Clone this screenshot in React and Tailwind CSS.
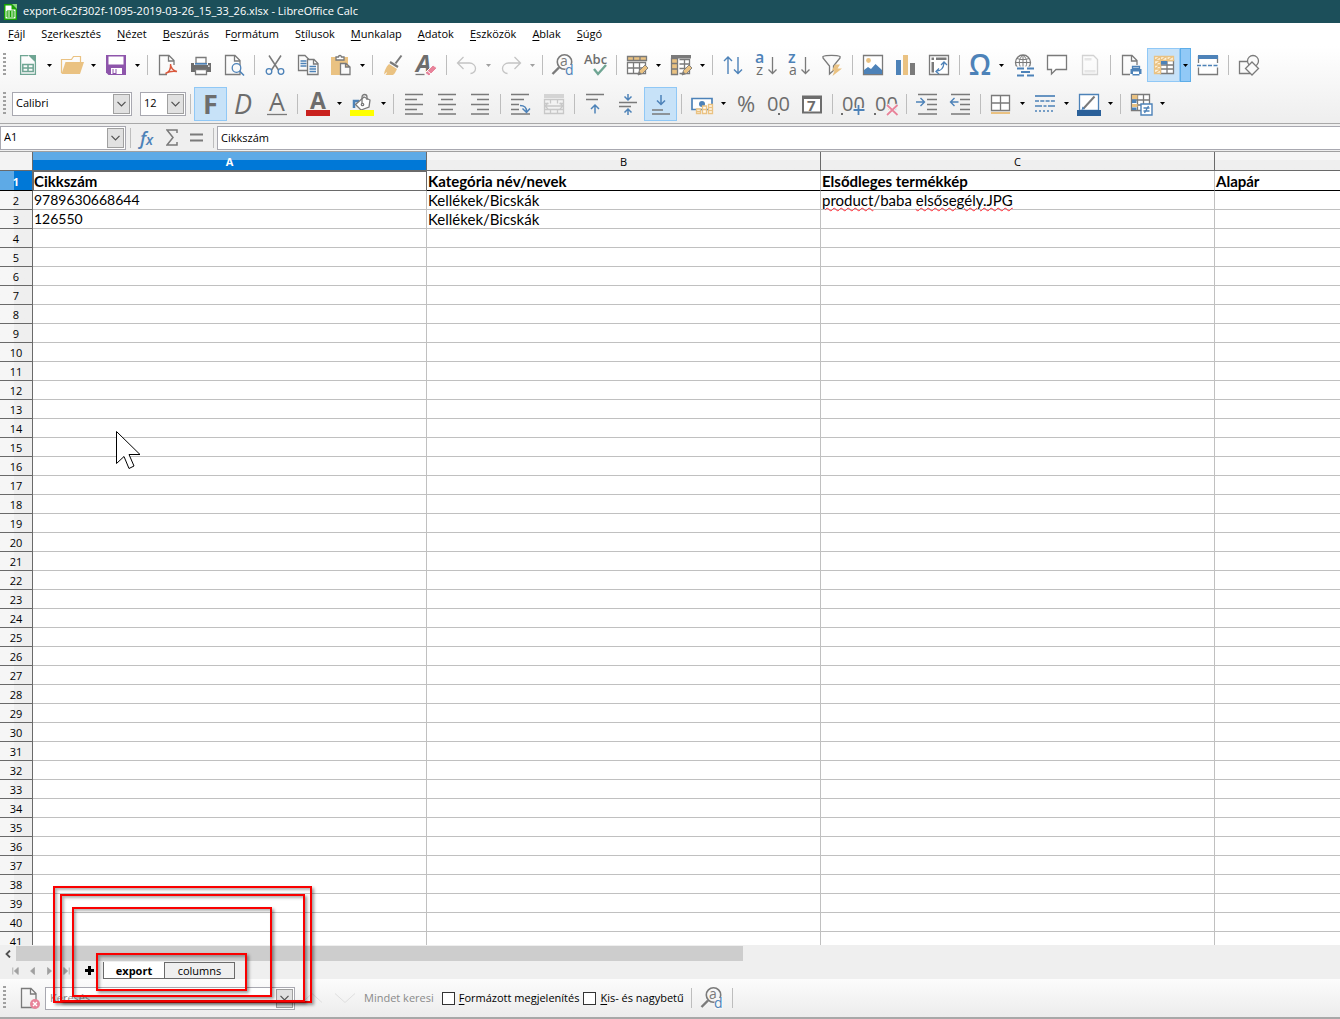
import { useState } from 'react'
import clsx from 'clsx'

const GRAY = '#7a7a7a'
const BLUE = '#4d82b8'
const SAND = '#eac282'
const PINK = '#e8839a'
const GREEN = '#6fa593'

/* Shared 24x24 icon canvas */
function Icon({ children }) {
  return (
    <svg
      width="24"
      height="24"
      viewBox="0 0 24 24"
      fill="none"
      stroke={GRAY}
      strokeWidth="1.3"
      className="shrink-0 overflow-visible"
      aria-hidden="true"
    >
      {children}
    </svg>
  )
}

/* Letter used as part of an icon */
function Glyph({ children, fill = '#6d6d6d', ...props }) {
  return (
    <text fontFamily="Open Sans, sans-serif" fill={fill} stroke="none" {...props}>
      {children}
    </text>
  )
}

const Page = () => <path d="M3.5 2.5h9.5l5 5v14H3.5zM12.5 2.5v5.5h5.5" />

const Pencil = () => (
  <g transform="translate(13 12)" stroke="none">
    <path d="M0 10l1.5-4.5L7 0l3 3-5.5 5.5z" fill={SAND} stroke={GRAY} strokeWidth="0.9" />
    <path d="M0 10l1.2-3.6 2.4 2.4z" fill={GRAY} />
  </g>
)

const icons = {
  newDoc: (
    <g stroke={GREEN}>
      <path d="M12 2.6H4.6v18.8h14.8V9" />
      <path d="M12 2h8v8z" fill={GREEN} stroke="none" />
      <path d="M6.8 11.5h10.4v7H6.8zM6.8 15h10.4M12 11.5v7" strokeWidth="1.5" />
    </g>
  ),
  open: (
    <g stroke="none">
      <path d="M1.5 20V6.5h10l2-3h7V9" stroke={SAND} strokeWidth="1.2" />
      <path d="M5.5 9h18.5L20 21H1.5z" fill={SAND} />
    </g>
  ),
  save: (
    <g stroke="none">
      <path d="M2 2h20v20H4.5L2 19.5z" fill="#8e55ab" />
      <path d="M4.5 3.5h15v8h-15zM7 15h11v6H7z" fill="#fff" />
      <path d="M8.5 16h4v5h-4z" fill="#8e55ab" />
      <path d="M9.5 16h2v4h-2z" fill="#fff" />
    </g>
  ),
  pdf: (
    <>
      <Page />
      <path d="M11 12h10v11H11z" fill="#fafafa" stroke="none" />
      <path d="M9.5 20.5c4-1.5 5.5-5 5-9.5 0 4 3 7 6.5 7.5-4-.8-8 0-11.5 2z" stroke="#d9583c" strokeWidth="1.4" />
    </>
  ),
  print: (
    <g stroke="none">
      <path d="M7 4.5h10v6H7z" fill="#fff" stroke={GRAY} />
      <path d="M2 10h3v2h14v-2h3v9H2z" fill="#6d6d6d" />
      <path d="M6 10h12v1.6H6z" fill={BLUE} />
      <path d="M6.5 16.5h11v5h-11z" fill="#fff" stroke={GRAY} />
      <path d="M19 12.5h1.6v1.3H19z" fill="#fff" />
    </g>
  ),
  preview: (
    <>
      <Page />
      <circle cx="14.5" cy="15" r="4.3" fill="#fafafa" stroke={BLUE} />
      <path d="M17.5 18l4.5 4.5" stroke={BLUE} strokeWidth="1.6" />
    </>
  ),
  cut: (
    <>
      <path d="M6 2.5L15.5 17M18 2.5L8.5 17" strokeWidth="1.5" />
      <circle cx="6" cy="18.5" r="2.8" stroke={BLUE} />
      <circle cx="18" cy="18.5" r="2.8" stroke={BLUE} />
    </>
  ),
  copy: (
    <>
      <path d="M2.5 2.5h6.5l4 4v11H2.5z" fill="#fafafa" />
      <path d="M4.5 8h6M4.5 10.5h6M4.5 13h6" stroke={BLUE} />
      <path d="M11.5 6.5h6.5l4 4v11H11.5zM17.5 6.5V11H22" fill="#fafafa" />
      <path d="M13.5 13.5h6.5M13.5 16h6.5M13.5 18.5h6.5" stroke={BLUE} />
    </>
  ),
  paste: (
    <>
      <path d="M2 4h17v18H2z" fill={SAND} stroke="none" />
      <path d="M7 7V4h2.5a1.5 1.5 0 0 1 3 0H15v3z" fill="#fff" />
      <path d="M11.5 10.5h5.5l4 3.5v7.5h-9.5zM16.5 10.5V14h4" fill="#fafafa" />
    </>
  ),
  brush: (
    <>
      <path d="M20.5 2.5l-6 8" strokeWidth="2" />
      <path d="M9 9l8 5" strokeWidth="2.2" />
      <path d="M8 11l8 5c-1.5 3.5-3 5.5-4 6H4.5c1-1 1.5-2 1.5-3l-3 2.5C3.5 17.5 5 14 8 11z" fill={SAND} stroke="none" />
    </>
  ),
  clear: (
    <>
      <Glyph x="2" y="19" fontSize="24" fontWeight="700" fontStyle="italic">A</Glyph>
      <path d="M1.5 21.5h9" />
      <path d="M11 20l8-8 4 3-8 8z" fill={PINK} stroke="#fafafa" strokeWidth="1" />
      <path d="M13 17.5l4 3.5" stroke="#fafafa" strokeWidth="1" />
    </>
  ),
  undo: <path d="M8.5 4L2.5 10l6 6M2.5 10h12a6 5.5 0 0 1 6 5.5 5 5 0 0 1-5 5" stroke="#c4c4c4" />,
  redo: <path d="M15.5 4l6 6-6 6M21.5 10h-12a6 5.5 0 0 0-6 5.5 5 5 0 0 0 5 5" stroke="#c4c4c4" />,
  find: (
    <>
      <circle cx="13.5" cy="9" r="7.2" strokeWidth="1.6" />
      <path d="M8 14.5L1.5 21" strokeWidth="2.4" />
      <Glyph x="9" y="13" fontSize="14" fill={GRAY}>a</Glyph>
      <path d="M14.500 12h8v11h-8z" fill="#f7f7f7" stroke="none" />
      <Glyph x="14" y="22" fontSize="14" fill={BLUE}>d</Glyph>
    </>
  ),
  spell: (
    <>
      <Glyph x="0" y="11" fontSize="13" fontWeight="600">Abc</Glyph>
      <path d="M10 16l4 5 8-9" stroke={GREEN} strokeWidth="2.4" />
    </>
  ),
  rows: (
    <>
      <path d="M2.5 9.5h18v11h-18zM2.5 15h18M8.5 9.5v11M14.5 9.5v11" fill="#fff" />
      <path d="M2.5 3.5h19v4h-19zM8.5 3.5v4M15 3.5v4" fill={SAND} />
      <Pencil />
    </>
  ),
  cols: (
    <>
      <path d="M10.5 6.5h10v14h-10M10.5 11h10M10.5 15.5h10M15.5 6.5v14" fill="#fff" />
      <path d="M2 2h20v3.5H2z" fill={GRAY} stroke="none" />
      <path d="M2.5 5.5h6v16h-6zM2.5 10.5h6M2.5 16h6" fill={SAND} />
      <Pencil />
    </>
  ),
  sort: (
    <g stroke={BLUE} strokeWidth="1.4">
      <path d="M7 21V4M3 8l4-4 4 4" />
      <path d="M17 4v16.5M13 16.500l4 4 4-4" />
    </g>
  ),
  sortAz: (
    <>
      <Glyph x="1" y="10" fontSize="16" fontWeight="600" fill={BLUE}>a</Glyph>
      <Glyph x="2" y="22" fontSize="15">z</Glyph>
      <path d="M18.5 4v16.5M14.5 16.5l4 4 4-4" />
    </>
  ),
  sortZa: (
    <>
      <Glyph x="1" y="10" fontSize="16" fontWeight="600" fill={BLUE}>z</Glyph>
      <Glyph x="2" y="22" fontSize="14">a</Glyph>
      <path d="M18.5 4v16.5M14.5 16.5l4 4 4-4" />
    </>
  ),
  filter: (
    <>
      <path d="M3 5V3.500c3-1.500 14-1.500 17 0V5l-6.500 8v4.500L9.500 21v-8z" fill="#fafafa" />
      <path d="M15 11.5h5l-2.5 4H22L12.5 23l2-5.5H12z" fill={SAND} stroke="none" />
    </>
  ),
  image: (
    <>
      <path d="M2.5 2.5h19v19h-19z" fill="#fff" />
      <circle cx="7.5" cy="7.5" r="2.4" fill={SAND} stroke="none" />
      <path d="M3 21v-4l4-3 3 2 4.500-5 6.500 6v4z" fill={BLUE} stroke="none" />
    </>
  ),
  chart: (
    <g stroke="none">
      <path d="M2 7h5v15H2z" fill={BLUE} />
      <path d="M9 2h5v20H9z" fill={SAND} />
      <path d="M16 10h5v12h-5z" fill={GRAY} />
    </g>
  ),
  pivot: (
    <>
      <path d="M2.5 2.5h19v19h-19z" fill="#fff" />
      <path d="M4.5 4.5H7V7H4.5zM9 4.5h10.5V7H9zM4.5 9H7v10.5H4.5z" fill={GRAY} stroke="none" />
      <path d="M9.5 18c5 0 7-3 7.5-8M14 12l3-3 3 3M12 15.5l-3 3 3 2.500" stroke={BLUE} />
    </>
  ),
  omega: <Glyph x="1" y="22" fontSize="28" fontWeight="600" fill={BLUE}>Ω</Glyph>,
  link: (
    <>
      <circle cx="11" cy="9.5" r="7.5" />
      <path d="M11 2v15M3.5 9.5h15M11 2c-5 4-5 11 0 15M11 2c5 4 5 11 0 15M5 5.5c4 1.500 8 1.500 12 0" strokeWidth="1" />
      <path d="M3 13.5h20v10H3z" fill="#fafafa" stroke="none" />
      <path d="M5 15.5h7M15 15.5h7M9 19h9M5 22.5h7M15 22.5h7" stroke={BLUE} strokeWidth="1.9" />
    </>
  ),
  comment: <path d="M2.5 2.5h19v14H11l-4.5 4.5v-4.5h-4z" fill="#fff" />,
  header: (
    <g stroke="#d2d2d2">
      <path d="M4.5 2.5h11l4 4v15h-15z" />
      <path d="M6.5 5h7v2.5h-7zM6.5 17h11v2.5h-11z" fill="#e6e6e6" stroke="none" />
    </g>
  ),
  printArea: (
    <>
      <Page />
      <path d="M11 12h12v11H11z" fill="#fafafa" stroke="none" />
      <path d="M13.5 13.5h7v2h-7z" stroke={BLUE} />
      <path d="M11.5 16h11v5h-2v1.5h-7V21h-2z" fill={BLUE} stroke="none" />
      <path d="M14 18.500h6V21h-6z" fill="#fff" stroke="none" />
    </>
  ),
  freeze: (
    <>
      <path d="M8.5 7.500h13v13h-13zM8.5 12h13M8.500 16h13M15 7.500v13" fill="#fff" />
      <path
        d="M2.5 3.500h19v4h-13v13h-6zM8.5 3.500v4h-6M15 3.500v4M2.5 12h6M2.5 16h6M2.5 7.500l6-4M8.500 7.500l6-4M15 7.500l6-4M2.500 12l6-4M2.500 16l6-4M2.500 20.500l6-4"
        fill="#fff4df"
        stroke={SAND}
      />
      <path d="M9 8h6v3.500H9z" fill={BLUE} stroke="none" />
    </>
  ),
  split: (
    <>
      <path d="M2.5 10V3.5h19V10M2.5 14.5v7h19v-7" fill="#fff" />
      <path d="M2 2h20v4H2z" fill={BLUE} stroke="none" />
      <path d="M1 12.5h22" stroke={BLUE} strokeDasharray="4 1.5" />
    </>
  ),
  shapes: (
    <>
      <path d="M2.5 8.5h10v12h-10z" />
      <circle cx="16" cy="8" r="5.5" fill="#fafafa" />
      <path d="M15 9l6.5 6.5-6.5 6.5-6.5-6.5z" fill="#fafafa" />
    </>
  ),
  bold: <Glyph x="4" y="22" fontSize="27" fontWeight="700">F</Glyph>,
  italic: <Glyph x="2" y="22" fontSize="27" fontStyle="italic">D</Glyph>,
  underline: (
    <>
      <Glyph x="4" y="19" fontSize="25">A</Glyph>
      <path d="M2 22.5h20" />
    </>
  ),
  fontColor: (
    <>
      <Glyph x="4" y="17" fontSize="23" fontWeight="700">A</Glyph>
      <path d="M0 18h24v6H0z" fill="#c9211e" stroke="none" />
    </>
  ),
  fillColor: (
    <>
      <path d="M4 16V9h5" stroke={BLUE} strokeWidth="2.5" />
      <path d="M5.5 12.5L14 5l6 3-1 7-8 3z" fill="#fff" />
      <path d="M12 12V5a2.5 2.5 0 0 1 5 0v3" />
      <circle cx="12.5" cy="12.500" r="1.2" />
      <path d="M0 18h24v6H0z" fill="#ffff00" stroke="none" />
    </>
  ),
  alignLeft: <path d="M3 2.5h18M3 7.5h12M3 12.5h18M3 17.5h12M3 22h18" />,
  alignCenter: <path d="M3 2.5h18M6 7.5h12M3 12.5h18M6 17.5h12M3 22h18" />,
  alignRight: <path d="M3 2.5h18M9 7.5h12M3 12.5h18M9 17.5h12M3 22h18" />,
  wrap: (
    <>
      <path d="M2 2.5h18M2 7.5h13M2 12.5h8M2 17.5h8M2 22h19" />
      <path d="M11 13.5c4 0 6.5 1 6.5 6M13.5 16.5l4 4 3.5-4" stroke={BLUE} strokeWidth="1.5" />
    </>
  ),
  merge: (
    <g stroke="#c8c8c8">
      <path d="M2.5 7.5h19v14h-19zM8.5 7.500v4M15.5 7.500v4M2.5 17.5h19M2.5 11.500h4M17.500 11.500h4M8.5 17.5v4M15.5 17.5v4" />
      <path d="M2 2h20v4H2z" fill="#d4d4d4" stroke="none" />
      <path d="M2.500 14h19M6 11l-3 3 3 3M18 11l3 3-3 3" />
    </g>
  ),
  top: (
    <>
      <path d="M3 2.5h18M3 7.5h12" />
      <path d="M12 21.5V13M8 17l4-4 4 4" stroke={BLUE} strokeWidth="1.5" />
    </>
  ),
  middle: (
    <>
      <path d="M3 10.5h18M3 14.500h12" />
      <path d="M12 2v6M8.5 4.5L12 8l3.500-3.500M12 23v-6M8.5 20.500L12 17l3.500 3.500" stroke={BLUE} strokeWidth="1.5" />
    </>
  ),
  bottom: (
    <>
      <path d="M3 18h11M3 22h18" />
      <path d="M12 3v9.5M8 8.5l4 4 4-4" stroke={BLUE} strokeWidth="1.5" />
    </>
  ),
  currency: (
    <>
      <path d="M2 6.5h20v11H2z" fill="#fff" stroke={BLUE} strokeWidth="1.7" />
      <circle cx="12" cy="12" r="3" fill={BLUE} stroke="none" />
      <g fill="#fffaf0" stroke={SAND}>
        <path d="M6.5 17h4v4.500h-4zM12.500 14h4v7.500h-4zM18.500 12.500h4v9h-4zM12.500 17.500h4M18.500 15.500h4M18.500 18.500h4M6.500 19.500h4" />
      </g>
    </>
  ),
  percent: <Glyph x="3" y="20" fontSize="22">%</Glyph>,
  decimals: (
    <>
      <Glyph x="0" y="19" fontSize="20">00</Glyph>
      <path d="M11 21h2v2h-2z" fill="#6d6d6d" stroke="none" />
    </>
  ),
  dateFmt: (
    <>
      <path d="M3 5h18v15.500H3z" strokeWidth="2" fill="#fff" stroke="#6d6d6d" />
      <path d="M2 3.500h20V7H2z" fill="#6d6d6d" stroke="none" />
      <Glyph x="7" y="19" fontSize="15" fontWeight="700">7</Glyph>
    </>
  ),
  addDec: (
    <>
      <Glyph x="1" y="19" fontSize="20">00</Glyph>
      <path d="M0 21h2v2H0zM0 0" fill="#6d6d6d" stroke="none" />
      <path d="M17.5 13v10M12.5 18h11" stroke="#f4f4f4" strokeWidth="4" />
      <path d="M17.5 13v10M12.5 18h11" stroke={BLUE} strokeWidth="1.8" />
    </>
  ),
  delDec: (
    <>
      <Glyph x="1" y="19" fontSize="20">00</Glyph>
      <path d="M0 21h2v2H0z" fill="#6d6d6d" stroke="none" />
      <path d="M13 13l10.500 10M23.500 13L13 23" stroke="#f4f4f4" strokeWidth="4" />
      <path d="M13 13l10.500 10M23.500 13L13 23" stroke={PINK} strokeWidth="1.8" />
    </>
  ),
  indentMore: (
    <>
      <path d="M3 2.5h19M12 7.5h10M12 12.5h10M12 17.5h10M3 22h19" />
      <path d="M1 10h8M5.5 6l4 4-4 4" stroke={BLUE} strokeWidth="1.4" />
    </>
  ),
  indentLess: (
    <>
      <path d="M3 2.5h19M12 7.5h10M12 12.5h10M12 17.5h10M3 22h19" />
      <path d="M2.5 10h8M6.5 6l-4 4 4 4" stroke={BLUE} strokeWidth="1.4" />
    </>
  ),
  borders: (
    <>
      <path d="M2.5 3.5h18v15h-18zM11.5 3.5v15M2.5 11h18" fill="#fff" />
      <path d="M2 20h19v2H2z" fill={SAND} stroke="none" />
    </>
  ),
  lineStyle: (
    <g stroke={BLUE} strokeWidth="1.7">
      <path d="M2 4h20" />
      <path d="M2 9h20" strokeDasharray="4 1.3" />
      <path d="M2 14h20" strokeDasharray="7 1.5 3 1.5" />
      <path d="M2 19h20" strokeDasharray="2 2" />
    </g>
  ),
  lineColor: (
    <>
      <path d="M2.5 2.5h19v16h-19z" fill="#fff" stroke={BLUE} />
      <path d="M17.5 4.500l-11 12" strokeWidth="2" />
      <path d="M4.500 18l1-3.500 2.500 2.500z" fill={BLUE} stroke="none" />
      <path d="M0 18h24v6H0z" fill="#2a6099" stroke="none" />
    </>
  ),
  condition: (
    <>
      <path d="M2.5 2.5h18v16h-18zM8.5 2.5v16M14.5 2.5v16M2.5 8h18M2.5 13h18" fill="#fff" />
      <path d="M3 3h5.500v4H3zM3 12h5.500v3H3z" fill={SAND} stroke="none" />
      <path d="M3 7.500h4.500v3.500H3zM3 15.500h4.500v2.500H3z" fill={BLUE} stroke="none" />
      <path d="M12 12h11v11H12z" fill="#fff" stroke={BLUE} strokeWidth="1.4" />
      <path d="M14.500 16h6M14.500 19h6M19.500 14l-4 7" stroke={BLUE} />
    </>
  ),
  closeFind: (
    <>
      <Page />
      <circle cx="17" cy="18" r="5" fill={PINK} stroke="none" />
      <path d="M15 16l4 4M19 16l-4 4" stroke="#fff" strokeWidth="1.4" />
    </>
  ),
}

/* [icon, label, flags] — flags: m = drop-down arrow, d = dimmed, a = pressed; null is a divider */
const standardBar = [
  ['newDoc', 'Új', 'm'], ['open', 'Megnyitás', 'm'], ['save', 'Mentés', 'm'], null,
  ['pdf', 'Exportálás PDF-be'], ['print', 'Nyomtatás'], ['preview', 'Nyomtatási kép'], null,
  ['cut', 'Kivágás'], ['copy', 'Másolás'], ['paste', 'Beillesztés', 'm'], null,
  ['brush', 'Formátum másolása'], ['clear', 'Formázás törlése'], null,
  ['undo', 'Visszavonás', 'md'], ['redo', 'Ismét', 'md'], null,
  ['find', 'Keresés és csere'], ['spell', 'Helyesírás'], null,
  ['rows', 'Sor', 'm'], ['cols', 'Oszlop', 'm'], null,
  ['sort', 'Rendezés'], ['sortAz', 'Növekvő'], ['sortZa', 'Csökkenő'], ['filter', 'Automatikus szűrő'], null,
  ['image', 'Kép'], ['chart', 'Diagram'], ['pivot', 'Kimutatástábla'], null,
  ['omega', 'Különleges karakter', 'm'], ['link', 'Hiperhivatkozás'], ['comment', 'Megjegyzés'], ['header', 'Élőfej és élőláb'], null,
  ['printArea', 'Nyomtatási tartomány'], ['freeze', 'Sorok és oszlopok rögzítése', 'ma'], ['split', 'Ablak felosztása'], null,
  ['shapes', 'Rajzfunkciók'],
]

const formatBar = [
  ['bold', 'Félkövér', 'a'], ['italic', 'Dőlt'], ['underline', 'Aláhúzott'], null,
  ['fontColor', 'Betűszín', 'm'], ['fillColor', 'Háttérszín', 'm'], null,
  ['alignLeft', 'Balra'], ['alignCenter', 'Középre'], ['alignRight', 'Jobbra'], null,
  ['wrap', 'Szövegtördelés'], ['merge', 'Cellák egyesítése'], null,
  ['top', 'Felülre'], ['middle', 'Függőlegesen középre'], ['bottom', 'Alulra', 'a'], null,
  ['currency', 'Pénznem', 'm'], ['percent', 'Százalék'], ['decimals', 'Szám'], ['dateFmt', 'Dátum'], null,
  ['addDec', 'Tizedesjegy hozzáadása'], ['delDec', 'Tizedesjegy törlése'], null,
  ['indentMore', 'Behúzás növelése'], ['indentLess', 'Behúzás csökkentése'], null,
  ['borders', 'Szegélyek', 'm'], ['lineStyle', 'Szegélystílus', 'm'], ['lineColor', 'Szegélyszín', 'm'], null,
  ['condition', 'Feltételes formázás', 'm'],
]

// The number is the index of the underlined access key
const menus = [
  ['Fájl', 0], ['Szerkesztés', 1], ['Nézet', 0], ['Beszúrás', 0], ['Formátum', 1], ['Stílusok', 1],
  ['Munkalap', 0], ['Adatok', 0], ['Eszközök', 0], ['Ablak', 0], ['Súgó', 0],
]

const columns = ['A', 'B', 'C', '']

const rows = [
  ['Cikkszám', 'Kategória név/nevek', 'Elsődleges termékkép', 'Alapár'],
  [9789630668644, 'Kellékek/Bicskák', ['product', '/baba ', 'elsősegély.JPG'], ''],
  [126550, 'Kellékek/Bicskák', '', ''],
  ...Array.from({ length: 38 }, () => ['', '', '', '']),
]

function AccessKey({ text, at }) {
  return (
    <>
      {text.slice(0, at)}
      <u className="underline-offset-2">{text[at]}</u>
      {text.slice(at + 1)}
    </>
  )
}

const Divider = () => (
  <span className="flex w-2 shrink-0 justify-center">
    <span className="h-5 w-px bg-[#bdbdbd]" />
  </span>
)

const Grip = () => (
  <svg width="4" height="24" className="shrink-0" aria-hidden="true">
    <path d="M1.5 0v24" stroke="#a0a0a0" strokeWidth="3" strokeDasharray="2 2" />
  </svg>
)

const Arrow = ({ dim }) => (
  <svg width="5" height="3" viewBox="0 0 5 3" aria-hidden="true">
    <path d="M0 0h5L2.5 3z" fill={dim ? '#a0a0a0' : '#000'} />
  </svg>
)

const Chevron = () => (
  <svg width="9" height="6" viewBox="0 0 9 6" fill="none" stroke="#505050" strokeWidth="1.2" aria-hidden="true">
    <path d="M.5.8l4 4 4-4" />
  </svg>
)

function ToolItems({ items }) {
  return items.map((item, i) => {
    if (!item) return <Divider key={i} />
    const [name, label, flags = ''] = item
    const active = flags.includes('a')
    return (
      <span key={i} className="flex h-[34px] shrink-0">
        <button
          aria-label={label}
          className={clsx(
            'flex w-[33px] items-center justify-center hover:bg-[#e5f3ff]',
            active && 'border border-[#90c8f6] bg-[#c7e2f8]',
          )}
        >
          <Icon>{icons[name]}</Icon>
        </button>
        {flags.includes('m') && (
          <button
            aria-label={`${label} lista`}
            className={clsx('flex w-[11px] items-center justify-center', active && 'border border-[#5dade8] bg-[#91c9f7]')}
          >
            <Arrow dim={flags.includes('d')} />
          </button>
        )}
      </span>
    )
  })
}

function Combo({ label, value, className }) {
  return (
    <span className={clsx('relative flex h-6 shrink-0 border border-[#a8a8b0] bg-white', className)}>
      <select aria-label={label} defaultValue={value} className="w-full appearance-none px-[3px] outline-none">
        <option>{value}</option>
      </select>
      <span className="pointer-events-none absolute inset-y-px right-px flex w-[17px] items-center justify-center border border-[#a0a0a0] bg-[#e1e1e1]">
        <Chevron />
      </span>
    </span>
  )
}

function CellText({ value }) {
  if (!Array.isArray(value)) return value
  const [first, mid, last] = value
  return (
    <>
      <span className="underline decoration-red-500 decoration-wavy decoration-1">{first}</span>
      {mid}
      <span className="underline decoration-red-500 decoration-wavy decoration-1">{last}</span>
    </>
  )
}

function Sheet() {
  return (
    <div className="min-h-0 flex-1 overflow-hidden bg-white">
      <table className="w-full table-fixed border-separate border-spacing-0">
        <colgroup>
          <col className="w-[33px]" />
          <col className="w-[394px]" />
          <col className="w-[394px]" />
          <col className="w-[394px]" />
          <col />
        </colgroup>
        <thead>
          <tr className="h-[19px]">
            <th className="border-r border-b border-[#6a6a6a] bg-[#f3f3f3] p-0" />
            {columns.map((name, i) => (
              <th
                key={i}
                className={clsx(
                  'border-r border-b border-[#6a6a6a] p-0 pt-px text-[11px] leading-[17px] last:border-r-0',
                  i === 0
                    ? 'bg-linear-to-b from-[#5eaae6] from-45% to-[#0078d7] to-45% font-bold text-white'
                    : 'bg-linear-to-b from-[#f6f6f6] from-45% to-[#efefef] to-45% font-normal',
                )}
              >
                {name}
              </th>
            ))}
          </tr>
        </thead>
        <tbody>
          {rows.map((cells, r) => (
            <tr key={r} className={r === 0 ? 'h-5' : 'h-[19px]'}>
              <th
                className={clsx(
                  'border-r border-b border-[#6a6a6a] p-0 pt-px text-[11px] leading-[17px]',
                  r === 0
                    ? 'border-b-black bg-linear-to-r from-[#5eaae6] from-45% to-[#0078d7] to-45% font-bold text-white'
                    : 'bg-linear-to-r from-[#f6f6f6] from-45% to-[#efefef] to-45% font-normal',
                )}
              >
                {r + 1}
              </th>
              {cells.map((value, c) => (
                <td
                  key={c}
                  className={clsx(
                    "border-r border-b border-[#c0c0c0] p-0 pl-px font-['Lato',sans-serif] leading-[18px] whitespace-nowrap last:border-r-0",
                    typeof value === 'number' ? 'text-[14px]' : 'text-[15px]',
                    r === 0 && 'border-b-black font-bold',
                    r === 0 && c === 0 && 'outline outline-1 -outline-offset-1 outline-[#6a6a6a]',
                  )}
                >
                  <CellText value={value} />
                </td>
              ))}
            </tr>
          ))}
        </tbody>
      </table>
    </div>
  )
}

const navShapes = {
  Első: 'M1 0v9M8 0v9L3 4.5z',
  Előző: 'M7 0v9L2 4.5z',
  Következő: 'M2 0v9l5-4.5z',
  Utolsó: 'M1 0v9l5-4.5zM8 0v9',
}

function SheetTabs() {
  return (
    <div className="flex h-[18px] items-end bg-[#efefef] pl-[7px]">
      {Object.entries(navShapes).map(([label, d]) => (
        <button key={label} aria-label={label} className="flex h-[17px] w-[17px] items-center justify-center">
          <svg width="7" height="8" viewBox="0 0 9 9" fill="#a0a0a0" stroke="#a0a0a0" strokeWidth="1">
            <path d={d} />
          </svg>
        </button>
      ))}
      <button aria-label="Munkalap hozzáadása" className="flex h-[17px] w-7 items-center justify-center">
        <svg width="9" height="9" viewBox="0 0 9 9" stroke="#000" strokeWidth="3">
          <path d="M4.5 0v9M0 4.5h9" />
        </svg>
      </button>
      <button className="h-[17px] w-[61px] border-b border-l border-[#6a6a6a] bg-white leading-[15px] font-bold">export</button>
      <button className="h-[17px] w-[71px] border border-[#6a6a6a] bg-[#efefef] leading-[15px]">columns</button>
    </div>
  )
}

function FindBar() {
  const [query, setQuery] = useState('')
  return (
    <div className="flex h-10 items-center border-b-2 border-[#a8a8a8] bg-linear-to-b from-[#fcfcfc] to-[#ececec] pl-[3px]">
      <Grip />
      <button aria-label="Keresősáv bezárása" className="ml-[7px] flex w-[31px] justify-center">
        <Icon>{icons.closeFind}</Icon>
      </button>
      <span className="flex h-[23px] w-[250px] border border-[#a8a8b0] bg-white p-px">
        <input
          aria-label="Keresés"
          placeholder="Keresés"
          value={query}
          onChange={(e) => setQuery(e.target.value)}
          className="min-w-0 flex-1 px-[3px] outline-none placeholder:text-[#8a8a8a]"
        />
        <button aria-label="Előzmények" className="flex w-[17px] items-center justify-center border border-[#a0a0a0] bg-[#e1e1e1]">
          <Chevron />
        </button>
      </span>
      <button aria-label="Előző találat" className="flex w-[33px] justify-center">
        <svg width="20" height="10" fill="none" stroke="#dedede"><path d="M0 9.500L10 .5l10 9" /></svg>
      </button>
      <button aria-label="Következő találat" className="flex w-[33px] justify-center">
        <svg width="20" height="10" fill="none" stroke="#dedede"><path d="M0 .5l10 9 10-9" /></svg>
      </button>
      <button className="ml-[3px] text-[#8a8a8a]">Mindet keresi</button>
      <label className="ml-2 flex items-center gap-1">
        <input type="checkbox" className="size-[13px] appearance-none border border-[#333] bg-white" />
        <span><AccessKey text="Formázott megjelenítés" at={0} /></span>
      </label>
      <label className="ml-1 flex items-center gap-1">
        <input type="checkbox" className="size-[13px] appearance-none border border-[#333] bg-white" />
        <span><AccessKey text="Kis- és nagybetű" at={0} /></span>
      </label>
      <span className="ml-1 flex items-center">
        <Divider />
        <button aria-label="Keresés és csere" className="flex w-[33px] justify-center"><Icon>{icons.find}</Icon></button>
        <Divider />
      </span>
    </div>
  )
}

/* Red frames drawn over the sheet tabs, anchored to the window's bottom */
const frames = [
  'bottom-4 left-[53px] h-[117px] w-[259px]',
  'bottom-[17px] left-[60px] h-[108px] w-[245px]',
  'bottom-[22px] left-[72px] h-[90px] w-[200px]',
  'bottom-7 left-[96px] h-[38px] w-[151px]',
]

export default function App() {
  return (
    <div className="relative flex h-screen flex-col overflow-hidden bg-[#efefef] font-['Open_Sans',sans-serif] text-[11px] text-black">
      <header className="flex h-[23px] shrink-0 items-center gap-[6px] bg-[#1c4f5a] pl-1 text-white">
        <svg width="13" height="16" viewBox="0 0 13 16" aria-hidden="true">
          <path d="M0 0h8l5 5v11H0z" fill="#18a303" />
          <path d="M1.5 1.5h6v4h4v9h-10z" fill="#fff" />
          <path d="M3 7h7v6H3zM3 9h7M3 11h7M6.5 7v6" fill="none" stroke="#18a303" />
          <path d="M8 0l5 5V0z" fill="#8ad67e" />
        </svg>
        <h1>export-6c2f302f-1095-2019-03-26_15_33_26.xlsx - LibreOffice Calc</h1>
      </header>

      <nav className="flex h-[23px] shrink-0 items-center bg-white">
        {menus.map(([text, at]) => (
          <button key={text} className="px-2"><AccessKey text={text} at={at} /></button>
        ))}
      </nav>

      <div className="shrink-0 border-b border-[#a8a8a8] bg-linear-to-b from-white to-[#eeeeee]">
        <div className="flex h-[38px] items-center pl-[3px]">
          <Grip />
          <span className="ml-1 flex items-center"><ToolItems items={standardBar} /></span>
        </div>
        <div className="flex h-[39px] items-center pl-[3px]">
          <Grip />
          <Combo label="Betűkészlet neve" value="Calibri" className="ml-[5px] w-[120px]" />
          <Combo label="Betűméret" value="12" className="ml-2 w-[46px]" />
          <Divider />
          <ToolItems items={formatBar} />
        </div>
      </div>

      <div className="flex h-7 shrink-0 items-center border-b border-[#a0a0a0]">
        <Combo label="Név mező" value="A1" className="w-[126px]" />
        <Divider />
        <button aria-label="Függvénytündér" className="flex w-[25px] justify-center text-lg leading-none font-semibold text-[#4d82b8] italic">
          f<sub className="bottom-0 self-end text-sm leading-none">x</sub>
        </button>
        <button aria-label="Összeg" className="flex w-[25px] justify-center">
          <svg width="12" height="17" fill="none" stroke={GRAY} strokeWidth="1.5"><path d="M11 4V1H1l6 7.500L1 16h10v-3" /></svg>
        </button>
        <button aria-label="Függvény" className="flex w-[25px] justify-center">
          <svg width="13" height="9" stroke={GRAY} strokeWidth="2"><path d="M0 1.500h13M0 7.500h13" /></svg>
        </button>
        <Divider />
        <input
          aria-label="Beviteli sor"
          defaultValue="Cikkszám"
          className="h-6 min-w-0 flex-1 border border-r-0 border-[#a8a8b0] bg-white px-[3px] outline-none"
        />
      </div>

      <Sheet />

      <footer className="shrink-0">
        <div className="flex h-4 items-end">
          <button aria-label="Görgetés balra" className="flex h-[15px] w-4 items-center justify-center">
            <svg width="6" height="8" fill="none" stroke="#505050" strokeWidth="1.8"><path d="M5 .5L1.500 4 5 7.500" /></svg>
          </button>
          <div className="h-[15px] w-[727px] bg-[#cdcdcd]" />
        </div>
        <SheetTabs />
        <FindBar />
      </footer>

      {frames.map((place) => (
        <div
          key={place}
          className={clsx('pointer-events-none absolute border-2 border-[#fa0000] shadow-[2px_2px_3px_rgba(0,0,0,0.4),inset_2px_2px_3px_rgba(0,0,0,0.3)]', place)}
        />
      ))}

      {/* Mouse pointer */}
      <svg width="27" height="40" viewBox="0 0 27 40" className="pointer-events-none absolute top-[430px] left-[115px]" aria-hidden="true">
        <path d="M1.5 1.5v32l7.5-7 5 12 5-2.5-5-11.5h11z" fill="#fff" stroke="#000" />
      </svg>
    </div>
  )
}
